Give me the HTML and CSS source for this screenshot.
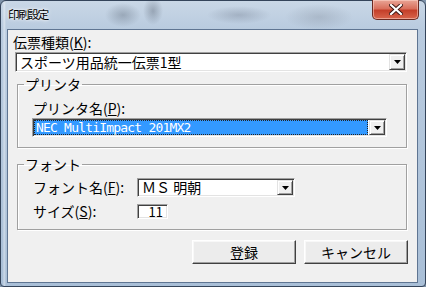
FILE: index.html
```html
<!DOCTYPE html>
<html lang="ja">
<head>
  <meta charset="UTF-8" />
  <title>印刷設定</title>
  <link rel="stylesheet" href="styles.css">
</head>

<body>

  <div class="window">

    <!-- Title bar -->
    <div class="titlebar">
      <span class="title">印刷設定</span>
      <button class="close-btn">
        <svg width="14" height="11" viewBox="0 0 14 11">
          <path d="M2 1 L12 10 M12 1 L2 10" stroke="#3a1410" stroke-width="4" stroke-linecap="square"/>
          <path d="M2 1 L12 10 M12 1 L2 10" stroke="#fff" stroke-width="2.2" stroke-linecap="square"/>
        </svg>
      </button>
    </div>

    <!-- Dialog body -->
    <div class="client">
      <div class="label">伝票種類(<u>K</u>):</div>
      <div class="combo slip-combo">
        <span class="combo-text">スポーツ用品統一伝票1型</span>
        <span class="drop-btn"><svg width="7" height="4" viewBox="0 0 7 4"><polygon points="0,0 7,0 3.5,4" fill="#000"/></svg></span>
      </div>

      <fieldset class="group">
        <legend>プリンタ</legend>
        <div class="group-body">
          <div class="label">プリンタ名(<u>P</u>):</div>
          <div class="combo printer-combo">
            <span class="combo-text selected">NEC MultiImpact 201MX2</span>
            <span class="drop-btn"><svg width="7" height="4" viewBox="0 0 7 4"><polygon points="0,0 7,0 3.5,4" fill="#000"/></svg></span>
          </div>
        </div>
      </fieldset>

      <fieldset class="group font-group">
        <legend>フォント</legend>
        <div class="group-body font-grid">
          <div class="label">フォント名(<u>F</u>):</div>
          <div class="combo font-combo">
            <span class="combo-text">ＭＳ 明朝</span>
            <span class="drop-btn"><svg width="7" height="4" viewBox="0 0 7 4"><polygon points="0,0 7,0 3.5,4" fill="#000"/></svg></span>
          </div>
          <div class="label">サイズ(<u>S</u>):</div>
          <div class="num-box">11</div>
        </div>
      </fieldset>

      <div class="buttons">
        <button class="btn">登録</button>
        <button class="btn">キャンセル</button>
      </div>
    </div>

  </div>

</body>
</html>
```

FILE: styles.css
```css
body {
  margin: 0;
  width: 426px;
  height: 287px;
  overflow: hidden;
  font-family: "Noto Sans CJK JP", sans-serif;
  background: #7f93aa;
}

/* Window frame (Aero glass look) */
.window {
  box-sizing: border-box;
  width: 426px;
  height: 287px;
  border: 1px solid #34445a;
  border-radius: 6px 6px 4px 4px;
  padding: 0 7px 3px 6px;
  display: flex;
  flex-direction: column;
  background:
    radial-gradient(ellipse 18px 12px at 122px 14px, rgba(80, 92, 108, 0.35), transparent),
    radial-gradient(ellipse 10px 14px at 152px 10px, rgba(70, 80, 95, 0.35), transparent),
    radial-gradient(ellipse 32px 9px at 238px 14px, rgba(85, 95, 115, 0.28), transparent),
    radial-gradient(ellipse 34px 13px at 318px 16px, rgba(120, 130, 145, 0.3), transparent),
    linear-gradient(to right, rgba(255, 255, 255, 0) 2px, rgba(255, 255, 255, 0.45) 3px, rgba(255, 255, 255, 0) 5px),
    linear-gradient(to bottom, #c9d7e6, #b9cbdf 28px, #a9bfd7);
}

.titlebar {
  height: 28px;
  display: flex;
  align-items: flex-start;
}

.title {
  margin: 7px 0 0 1px;
  font-size: 11.5px;
  line-height: 13px;
  letter-spacing: -1.6px;
  color: #000;
  text-shadow: 0 0 4px #fff, 0 0 2px #fff;
}

.close-btn {
  margin: -1px -1px 0 auto;
  width: 47px;
  height: 20px;
  padding: 0;
  border: 1px solid #6b2a22;
  border-top: none;
  border-radius: 0 0 5px 5px;
  display: flex;
  align-items: center;
  justify-content: center;
  background: linear-gradient(to bottom, #e9a596, #d9705d 45%, #c43f2a 55%, #d8654c);
  box-shadow: inset 0 0 0 1px rgba(255, 220, 210, 0.5);
}

/* Client area */
.client {
  flex: 1;
  background: #f0f0f0;
  border: 1px solid #5f7592;
  padding: 5px 10px 0 5px;
  font-size: 14px;
  color: #000;
}

.label {
  line-height: 15px;
  font-size: 14px;
  white-space: nowrap;
}

/* Sunken combo boxes */
.combo {
  box-sizing: border-box;
  display: flex;
  align-items: stretch;
  background: #fff;
  border: 1px solid;
  border-color: #a0a0a0 #fff #fff #a0a0a0;
  box-shadow: inset 1px 1px #404040, inset -1px -1px #e3e3e3;
  padding: 1px;
}

.combo-text {
  flex: 1;
  display: flex;
  align-items: center;
  padding-left: 3px;
  font-size: 14px;
  line-height: 15px;
  white-space: nowrap;
}

.drop-btn {
  box-sizing: border-box;
  width: 16px;
  display: flex;
  align-items: center;
  justify-content: center;
  background: #f0f0f0;
  border: 1px solid;
  border-color: #e3e3e3 #404040 #404040 #e3e3e3;
  box-shadow: inset 1px 1px #fff, inset -1px -1px #a0a0a0;
}

.slip-combo {
  margin: 2px 0 0 2px;
  height: 20px;
}

.printer-combo {
  margin: 2px 0 0 -1px;
  width: 355px;
  height: 19px;
}

.selected {
  background: #3399ff;
  color: #fff;
  border: 1px dotted #222;
  margin-right: 1px;
  padding-left: 1px;
  font-family: "DejaVu Sans Mono", monospace;
  font-size: 13px;
  letter-spacing: -0.8px;
  line-height: 13px;
}

.font-combo {
  width: 158px;
  height: 19px;
}

/* Group boxes */
.group {
  margin: 6px 0 0 4px;
  padding: 0 6px;
  border: 1px solid #a0a0a0;
  box-shadow: inset 1px 1px #fff, 1px 1px #fff;
  min-width: 0;
}

.group legend {
  padding: 0 1px;
  font-size: 14px;
  line-height: 13px;
}

.group-body {
  padding: 10px 0 10px 9px;
}

.font-group {
  margin-top: 10px;
}

.font-grid {
  padding-top: 7px;
  display: grid;
  grid-template-columns: 104px auto;
  grid-template-rows: 19px 15px;
  row-gap: 7px;
  align-items: center;
  justify-items: start;
}

.num-box {
  box-sizing: border-box;
  width: 31px;
  height: 15px;
  display: flex;
  align-items: center;
  justify-content: flex-end;
  background: #fff;
  border: 1px solid;
  border-color: #a0a0a0 #fff #fff #a0a0a0;
  box-shadow: inset 1px 1px #404040, inset -1px -1px #e3e3e3;
  padding-right: 4px;
  font-size: 13px;
  line-height: 13px;
}

/* Bottom buttons */
.buttons {
  margin: 10px -1px 0 0;
  display: flex;
  justify-content: flex-end;
  gap: 8px;
}

.btn {
  box-sizing: border-box;
  width: 104px;
  height: 24px;
  padding: 0;
  font-family: "Noto Sans CJK JP", sans-serif;
  font-size: 14px;
  color: #000;
  background: #ececec;
  border: 1px solid;
  border-color: #fff #404040 #404040 #fff;
  box-shadow: inset -1px -1px #a0a0a0, inset 1px 1px #f8f8f8;
}
```
